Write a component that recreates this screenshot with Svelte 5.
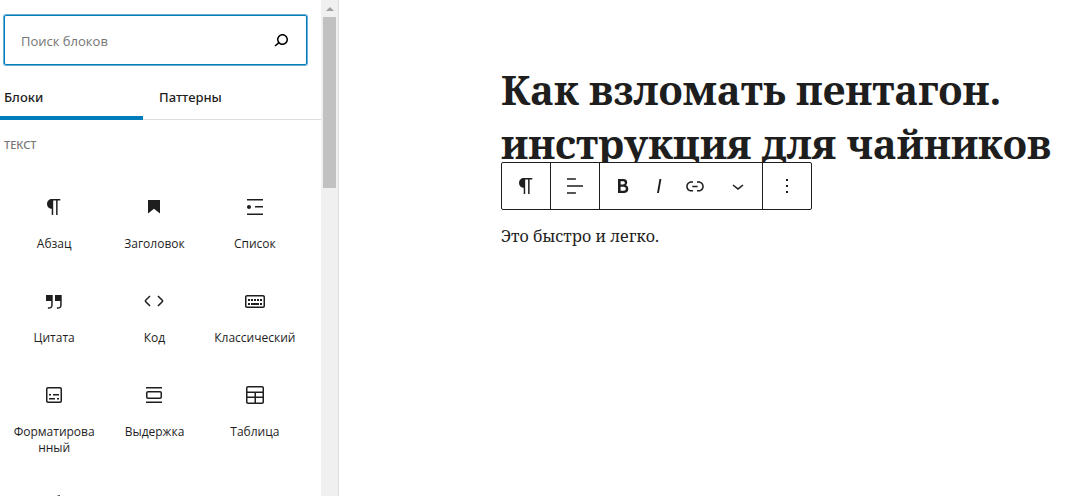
<script>
  const icons = {
    paragraph: 'M18.3 4H9.9v-.1l-.9.2c-2.3.4-4 2.4-4 4.8s1.7 4.4 4 4.8l.7.1V20h1.5V5.5h2.9V20h1.5V5.5h2.7V4z',
    heading: 'M6 5V18.5911L12 13.8473L18 18.5911V5H6Z',
    list: 'M4 4v1.5h16V4H4zm8 8.5h8V11h-8v1.5zM4 20h16v-1.5H4V20zm4-8c0-1.1-.9-2-2-2s-2 .9-2 2 .9 2 2 2 2-.9 2-2z',
    quote: 'M13 6v6h5.2v4c0 .8-.2 1.4-.5 1.7-.6.6-1.6.6-2.5.5h-.3v1.5h.5c1 0 2.3-.1 3.3-1 .6-.6 1-1.6 1-2.8V6H13zm-9 6h5.2v4c0 .8-.2 1.4-.5 1.7-.6.6-1.6.6-2.5.5h-.3v1.5h.5c1 0 2.3-.1 3.3-1 .6-.6 1-1.6 1-2.8V6H4v6z',
    code: 'M20.8 10.7l-4.3-4.3-1.1 1.1 4.3 4.3c.1.1.1.3 0 .4l-4.3 4.3 1.1 1.1 4.3-4.3c.7-.8.7-1.9 0-2.6zM4.2 11.8l4.3-4.3-1-1-4.3 4.3c-.7.7-.7 1.8 0 2.5l4.3 4.3 1.1-1.1-4.3-4.3c-.2-.1-.2-.3-.1-.4z',
    classic: 'M20 6H4c-1.1 0-2 .9-2 2v9c0 1.1.9 2 2 2h16c1.1 0 2-.9 2-2V8c0-1.1-.9-2-2-2zm.5 11c0 .3-.2.5-.5.5H4c-.3 0-.5-.2-.5-.5V8c0-.3.2-.5.5-.5h16c.3 0 .5.2.5.5v9zM10 10H8v2h2v-2zm-5 2h2v-2H5v2zm8-2h-2v2h2v-2zm-5 6h8v-2H8v2zm6-4h2v-2h-2v2zm3 0h2v-2h-2v2zm0 4h2v-2h-2v2zM5 16h2v-2H5v2z',
    preformatted: 'M18 4H6c-1.1 0-2 .9-2 2v12c0 1.1.9 2 2 2h12c1.1 0 2-.9 2-2V6c0-1.1-.9-2-2-2zm.5 14c0 .3-.2.5-.5.5H6c-.3 0-.5-.2-.5-.5V6c0-.3.2-.5.5-.5h12c.3 0 .5.2.5.5v12zM7 16.5h6V15H7v1.5zm4-4h6V11h-6v1.5zM9 11H7v1.5h2V11zm6 5.5h2V15h-2v1.5z',
    pullquote: 'M18 8H6c-1.1 0-2 .9-2 2v4c0 1.1.9 2 2 2h12c1.1 0 2-.9 2-2v-4c0-1.1-.9-2-2-2zm.5 6c0 .3-.2.5-.5.5H6c-.3 0-.5-.2-.5-.5v-4c0-.3.2-.5.5-.5h12c.3 0 .5.2.5.5v4zM4 4v1.5h16V4H4zm0 16h16v-1.5H4V20z',
    table: 'M19 3H5c-1.1 0-2 .9-2 2v14c0 1.1.9 2 2 2h14c1.1 0 2-.9 2-2V5c0-1.1-.9-2-2-2zM5 4.5h14c.3 0 .5.2.5.5v3.5h-15V5c0-.3.2-.5.5-.5zm8 5.5h6.5v3.5H13V10zm-1.5 3.5h-7V10h7v3.5zm-7 5.5v-4h7v4.5H5c-.3 0-.5-.2-.5-.5zm14.5.5h-6V15h6.5v4c0 .3-.2.5-.5.5z',
    verse: 'M17.8 2l-.9.3c-.1 0-3.6 1-5.2 2.1C10 5.5 9.3 6.5 8.9 7.1c-.6.9-1.7 4.7-1.7 6.3l-.9 2.3c-.2.4 0 .8.4 1 .1 0 .2.1.3.1.3 0 .6-.2.7-.5l.6-1.5c.3 0 .7-.1 1.2-.2.7-.1 1.4-.3 2.2-.5.8-.2 1.6-.5 2.4-.8.7-.3 1.4-.7 1.9-1.2s.8-1.2 1-1.9c.2-.7.3-1.6.4-2.4.1-.8.1-1.7.2-2.5 0-.8.1-1.5.2-2.1V2z',
    search: 'M13.5 6C10.5 6 8 8.5 8 11.5c0 1.1.3 2.1.9 3l-3.4 3 1 1.1 3.4-2.9c1 .9 2.2 1.4 3.6 1.4 3 0 5.5-2.5 5.5-5.5C19 8.5 16.5 6 13.5 6zm0 9.5c-2.2 0-4-1.8-4-4s1.8-4 4-4 4 1.8 4 4-1.8 4-4 4z',
    align: 'M4 19.8h8.9v-1.5H4v1.5zm8.9-15.6H4v1.5h8.9V4.2zm-8.9 7v1.5h16v-1.5H4z',
    bold: 'M14.7 11.3c1-.6 1.5-1.6 1.5-3 0-2.3-1.3-3.4-4-3.4H7v14h5.8c1.4 0 2.5-.3 3.3-1 .8-.7 1.2-1.7 1.2-2.9.1-1.9-.8-3.1-2.6-3.7zm-5.1-4h2.3c.6 0 1.1.1 1.4.4.3.3.5.7.5 1.2s-.2 1-.5 1.2c-.3.3-.8.4-1.4.4H9.6V7.3zm4.6 9c-.4.3-1 .4-1.7.4H9.6v-3.9h2.9c.7 0 1.3.2 1.7.5.4.3.6.8.6 1.5s-.2 1.2-.6 1.5z',
    italic: 'M12.5 5L10 19h1.9l2.5-14z',
    link: 'M15.6 7.2H14v1.5h1.6c2 0 3.7 1.7 3.7 3.7s-1.7 3.7-3.7 3.7H14v1.5h1.6c2.8 0 5.2-2.3 5.2-5.2 0-2.9-2.3-5.2-5.2-5.2zM4.7 12.4c0-2 1.7-3.7 3.7-3.7H10V7.2H8.4c-2.9 0-5.2 2.3-5.2 5.2 0 2.9 2.3 5.2 5.2 5.2H10v-1.5H8.4c-2 0-3.7-1.7-3.7-3.7zm4.6.9h5.3v-1.5H9.3v1.5z',
    chevron: 'M17.5 11.6L12 16l-5.5-4.4.9-1.2L12 14l4.5-3.6 1 1.2z',
    more: 'M13 19h-2v-2h2v2zm0-6h-2v-2h2v2zm0-6h-2V5h2v2z'
  };

  const blocks = [
    { icon: 'paragraph', label: 'Абзац' },
    { icon: 'heading', label: 'Заголовок' },
    { icon: 'list', label: 'Список' },
    { icon: 'quote', label: 'Цитата' },
    { icon: 'code', label: 'Код' },
    { icon: 'classic', label: 'Классический' },
    { icon: 'preformatted', label: 'Форматированный' },
    { icon: 'pullquote', label: 'Выдержка' },
    { icon: 'table', label: 'Таблица' },
    { icon: 'verse', label: 'Стихи' }
  ];

  const toolGroups = [
    [{ icon: 'paragraph', label: 'Абзац' }],
    [{ icon: 'align', label: 'Выравнивание' }],
    [
      { icon: 'bold', label: 'Жирный' },
      { icon: 'italic', label: 'Курсив' },
      { icon: 'link', label: 'Ссылка' },
      { icon: 'chevron', label: 'Ещё' }
    ],
    [{ icon: 'more', label: 'Параметры' }]
  ];

  let query = $state('');
  let tab = $state('Блоки');
</script>

{#snippet glyph(name)}
  <svg class="icon" viewBox="0 0 24 24" aria-hidden="true"><path d={icons[name]} /></svg>
{/snippet}

<div class="editor">
  <aside class="inserter">
    <div class="panel">
      <div class="search">
        <input type="text" aria-label="Поиск блоков" placeholder="Поиск блоков" bind:value={query} />
        <button class="search-button" aria-label="Поиск">{@render glyph('search')}</button>
      </div>
      <div class="tabs" role="tablist">
        {#each ['Блоки', 'Паттерны'] as name}
          <button class="tab" class:active={tab === name} role="tab" aria-selected={tab === name} onclick={() => (tab = name)}>{name}</button>
        {/each}
      </div>
      <h2>Текст</h2>
      <div class="grid">
        {#each blocks as block}
          <button class="tile">
            {@render glyph(block.icon)}
            <span>{block.label}</span>
          </button>
        {/each}
      </div>
    </div>
    <div class="scrollbar" aria-hidden="true">
      <svg class="arrow" viewBox="0 0 8 4"><path d="M0 4L4 0L8 4z" /></svg>
      <div class="thumb"></div>
    </div>
  </aside>

  <main>
    <h1>Как взломать пентагон.<br />инструкция для чайников</h1>
    <div class="block">
      <div class="toolbar" role="toolbar" aria-label="Инструменты блока">
        {#each toolGroups as group}
          <div class="group" class:wide={group.length > 1}>
            {#each group as tool}
              <button aria-label={tool.label}>{@render glyph(tool.icon)}</button>
            {/each}
          </div>
        {/each}
      </div>
      <p>Это быстро и легко.</p>
    </div>
  </main>
</div>

<style>
  :global(body) {
    background: #fff;
  }
  .editor {
    display: flex;
    height: 100vh;
    overflow: hidden;
    color: #1e1e1e;
    font-family: "Open Sans", "Noto Sans", sans-serif;
    font-size: 13px;
  }
  button {
    border: 0;
    padding: 0;
    background: none;
    color: inherit;
    font: inherit;
    cursor: pointer;
  }
  .icon {
    display: block;
    width: 24px;
    height: 24px;
    fill: currentColor;
  }
  .inserter {
    display: flex;
    flex: 0 0 338px;
    border-right: 1px solid #ddd;
    overflow: hidden;
  }
  .panel {
    flex: 1;
    min-width: 0;
  }
  .search {
    display: flex;
    align-items: center;
    height: 48px;
    margin: 15px 14px 0 4px;
    padding: 0 13px 0 16px;
    border: 1px solid #007cba;
    border-radius: 2px;
    box-shadow: 0 0 0 1px #66b0d6;
  }
  .search input {
    flex: 1;
    min-width: 0;
    padding: 2px 0 0;
    border: 0;
    outline: 0;
    background: none;
    color: inherit;
    font: inherit;
  }
  .search input::placeholder {
    color: #757575;
    opacity: 1;
  }
  .search-button {
    color: #000;
  }
  .tabs {
    display: flex;
    margin-top: 10px;
    border-bottom: 1px solid #ddd;
  }
  .tab {
    height: 45px;
    padding: 0 16px 2px 4px;
    font-family: "Noto Sans", "Open Sans", sans-serif;
    font-weight: 500;
    text-align: left;
    flex: 0 0 143px;
    margin-bottom: -1px;
  }
  .tab + .tab {
    padding-left: 16px;
  }
  .tab.active {
    box-shadow: inset 0 -4px 0 #007cba;
  }
  h2 {
    margin: 15px 4px 0;
    color: #757575;
    font-family: "Noto Sans", "Open Sans", sans-serif;
    font-size: 11px;
    font-weight: 500;
    line-height: 20px;
    text-transform: uppercase;
  }
  .grid {
    display: grid;
    grid-template-columns: repeat(3, 1fr);
    margin: 24px 16px 0 4px;
  }
  .tile {
    display: flex;
    flex-direction: column;
    align-items: center;
    gap: 17px;
    padding: 16px 8px 21px;
    font-size: 12px;
    line-height: 16px;
  }
  .tile span {
    width: 100%;
    overflow-wrap: anywhere;
    text-align: center;
  }
  .scrollbar {
    display: flex;
    flex: 0 0 17px;
    flex-direction: column;
    align-items: center;
    background: #f0f0f0;
  }
  .arrow {
    width: 8px;
    height: 4px;
    margin: 7px 0 6px;
    fill: #a0a0a0;
  }
  .thumb {
    width: 13px;
    height: 171px;
    background: #c1c1c1;
  }
  main {
    flex: 1;
    min-width: 0;
    padding: 63px 16px 0 162px;
    font-family: "Noto Serif", "DejaVu Serif", serif;
  }
  h1 {
    margin: 0;
    font-size: 40px;
    font-weight: 700;
    line-height: 54px;
    white-space: nowrap;
  }
  .block {
    position: relative;
    margin-top: 51px;
  }
  .toolbar {
    position: absolute;
    bottom: calc(100% + 12px);
    left: 0;
    display: flex;
    border: 1px solid #1e1e1e;
    border-radius: 2px;
    background: #fff;
  }
  .group {
    display: flex;
    align-items: center;
    height: 46px;
  }
  .group + .group {
    border-left: 1px solid #1e1e1e;
  }
  .group button {
    display: grid;
    place-items: center;
    width: 48px;
    height: 46px;
  }
  .group.wide {
    padding-left: 5px;
  }
  .group.wide button:not(:last-child) {
    width: 36px;
  }
  .group.wide button:last-child {
    width: 49px;
  }
  p {
    margin: 0;
    font-size: 16px;
    line-height: 28px;
  }
</style>
